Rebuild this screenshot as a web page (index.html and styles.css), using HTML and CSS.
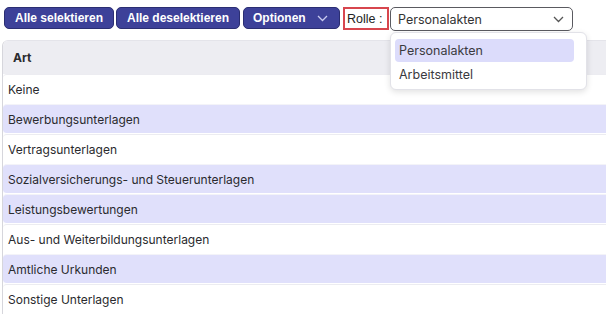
FILE: index.html
```html
<!DOCTYPE html>
<html lang="de">
<head>
  <meta charset="UTF-8">
  <title>Rollen</title>
  <link rel="stylesheet" href="styles.css">
</head>
<body>
<div class="toolbar">
  <button class="btn">Alle selektieren</button>
  <button class="btn">Alle deselektieren</button>
  <button class="btn btn-menu">Optionen
    <svg class="chev" width="11" height="7" viewBox="0 0 11 7"><path d="M1 1l4.5 4.5L10 1" fill="none" stroke="currentColor" stroke-width="1.3"/></svg>
  </button>
  <span class="role-label">Rolle :</span>
  <div class="select-wrap">
    <div class="select">
      <span>Personalakten</span>
      <svg class="chev" width="11" height="7" viewBox="0 0 11 7"><path d="M1 1l4.5 4.5L10 1" fill="none" stroke="#555" stroke-width="1.3"/></svg>
    </div>
    <ul class="dropdown">
      <li class="active">Personalakten</li>
      <li>Arbeitsmittel</li>
    </ul>
  </div>
</div>

<div class="table">
  <div class="head">Art</div>
  <div class="row">Keine</div>
  <div class="row alt">Bewerbungsunterlagen</div>
  <div class="row">Vertragsunterlagen</div>
  <div class="row alt">Sozialversicherungs- und Steuerunterlagen</div>
  <div class="row alt">Leistungsbewertungen</div>
  <div class="row">Aus- und Weiterbildungsunterlagen</div>
  <div class="row alt">Amtliche Urkunden</div>
  <div class="row">Sonstige Unterlagen</div>
</div>
</body>
</html>
```

FILE: styles.css
```css
* {
  box-sizing: border-box;
}
body {
  margin: 0;
  background: #fff;
  font-family: Inter, "Noto Sans", sans-serif;
  color: #2a2a2e;
  overflow: hidden;
}
.toolbar {
  display: flex;
  align-items: flex-start;
  gap: 2px;
  padding: 7px 0 0 4px;
  height: 31px;
}
.btn {
  height: 22px;
  padding: 0;
  background: #3d4199;
  color: #fff;
  border: 1px solid #2b2e72;
  border-radius: 5px;
  font-family: "Liberation Sans", Arial, sans-serif;
  font-weight: bold;
  font-size: 12px;
  display: flex;
  align-items: center;
  justify-content: center;
  cursor: pointer;
  width: 110px;
}
.btn + .btn {
  width: 124px;
}
.btn.btn-menu {
  width: 97px;
  margin-left: 1px;
  justify-content: space-between;
  padding: 0 11px 0 9px;
}
.btn-menu .chev {
  color: #c9cbf0;
}
.role-label {
  margin-left: 1px;
  height: 23px;
  width: 46px;
  border: 2px solid #d7464e;
  padding-left: 2px;
  font-family: "Liberation Sans", Arial, sans-serif;
  font-size: 12.5px;
  line-height: 20px;
  color: #222;
}
.select-wrap {
  position: relative;
  margin-left: -1px;
}
.select {
  width: 183px;
  height: 24px;
  border: 1px solid #5a5a60;
  border-radius: 5px;
  padding: 0 8px 0 7px;
  display: flex;
  align-items: center;
  justify-content: space-between;
  font-size: 12.5px;
  color: #333;
}
.dropdown {
  position: absolute;
  top: 25px;
  left: 0;
  width: 197px;
  height: 58px;
  margin: 0;
  padding: 6px 12px 0 4px;
  list-style: none;
  background: #fff;
  border: 1px solid #e2e2e8;
  border-radius: 6px;
  box-shadow: 0 2px 6px rgba(0,0,0,0.12);
  font-size: 12.5px;
  color: #3a3a40;
  z-index: 2;
}
.dropdown li {
  height: 23px;
  line-height: 23px;
  padding-left: 4px;
  margin-bottom: 1px;
  border-radius: 4px;
}
.dropdown li.active {
  background: #dcdcfb;
}
.table {
  margin: 9px 0 0 2px;
  border-left: 1px solid #d6d6dc;
  border-top: 1px solid #e4e4ea;
  border-top-left-radius: 6px;
  overflow: hidden;
}
.head {
  height: 33px;
  line-height: 33px;
  background: #ededf2;
  padding-left: 10px;
  font-weight: bold;
  font-size: 12px;
  color: #2a2a2e;
}
.row {
  height: 30px;
  line-height: 28px;
  padding: 1px 0 0 5px;
  font-size: 12px;
  border-top: 1px solid #ececf1;
  border-bottom: 1px solid #fff;
  border-radius: 4px 0 0 4px;
}
.row.alt {
  background: #e0e0fb;
  border-top-color: #f3f3f8;
}
```
